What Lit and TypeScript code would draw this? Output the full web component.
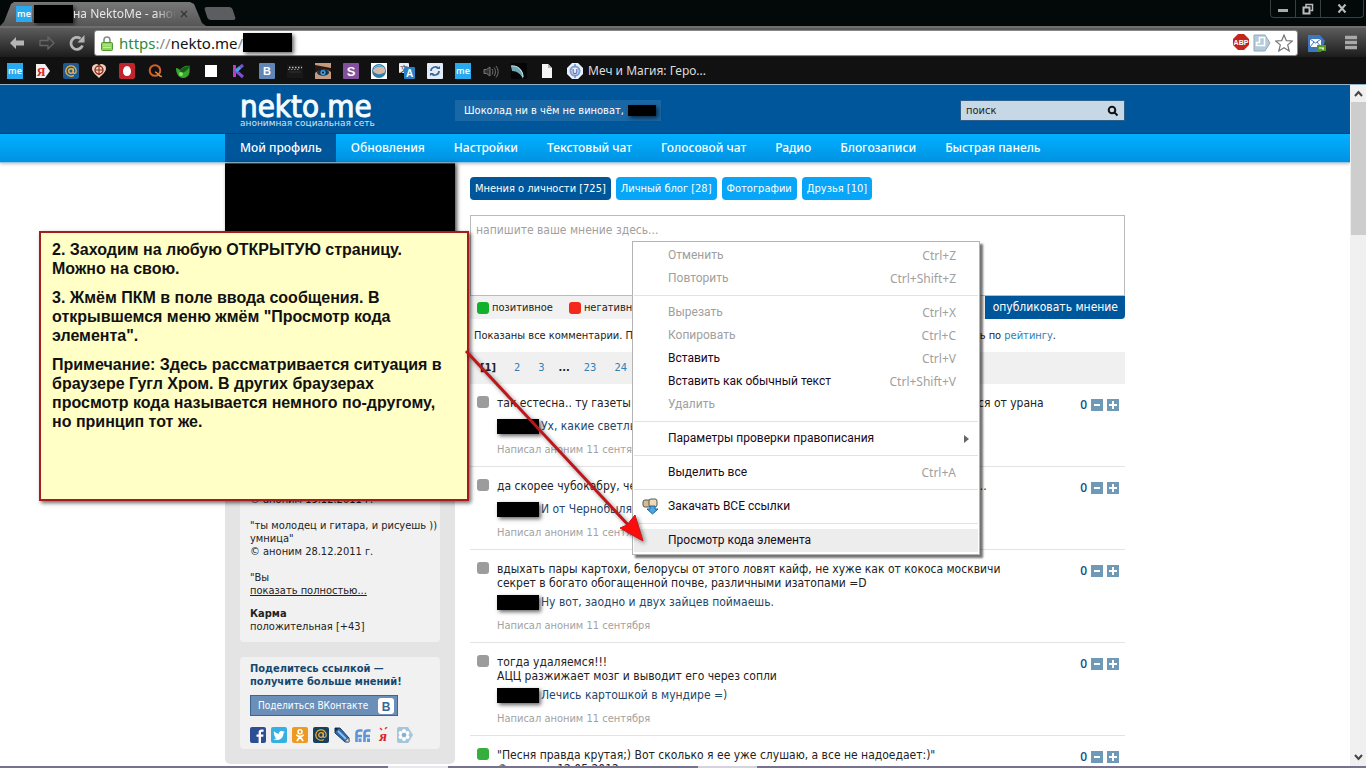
import { LitElement, html, css, svg, nothing } from "lit";
import { customElement } from "lit/decorators.js";
import { classMap } from "lit/directives/class-map.js";

const ico = (body: unknown, size = 16) =>
  html`<svg class="ico" width=${size} height=${size} viewBox="0 0 16 16" aria-hidden="true">${body}</svg>`;

const meIcon = svg`<rect width="16" height="16" fill="#2aa9ee"/><text x="8" y="11" text-anchor="middle" font-family="Open Sans, sans-serif" font-weight="600" font-size="9" fill="#fff">me</text>`;

const bookmarkIcons = [
  meIcon,
  svg`<path d="M1 1h9l5 7-5 7H1z" fill="#f1f1f1"/><text x="6" y="12.500" text-anchor="middle" font-family="Liberation Serif, serif" font-weight="700" font-size="12" fill="#d22">Я</text>`,
  svg`<rect width="16" height="16" rx="2" fill="#1d5a92"/><circle cx="8" cy="8" r="2.300" fill="none" stroke="#f0b040" stroke-width="1.400"/><path d="M10.300 5.500v3.700c0 1.800 2.900 1.500 2.900-1.200a5.200 5.200 0 1 0-2.400 4.400" fill="none" stroke="#f0b040" stroke-width="1.300"/>`,
  svg`<path d="M8 15C4 11 1 9 1 5a4 4 0 0 1 7-2.500A4 4 0 0 1 15 5c0 4-3 6-7 10z" fill="#f1cdbb"/><circle cx="8" cy="7" r="4" fill="none" stroke="#8b2d1a" stroke-width="1.300"/><path d="M4 7h8M8 3v8M5.500 9.500 8 12l2.500-2.500" stroke="#8b2d1a" fill="none"/>`,
  svg`<rect width="16" height="16" rx="2" fill="#c3242b"/><path d="M8 3c2.500 0 4 3 4 5.500S10.500 13 8 13s-4-2-4-4.500S5.500 3 8 3z" fill="#fff"/>`,
  svg`<circle cx="8" cy="7.500" r="5.300" fill="none" stroke="#d0622a" stroke-width="2"/><path d="M8 9c3 0 3.500 5 7 4.500" fill="none" stroke="#e28238" stroke-width="1.600"/>`,
  svg`<path d="M1 5c2 0 3 1 4 2 2-3 6-5 10-4-1 1 0 3-.5 6.500A6.500 6.500 0 0 1 8 15C4 15 1 11 1 5z" fill="#39a52d"/><path d="M5 7c3-3 6-4 10-4-2 4-6 7-9 7z" fill="#165e18"/><circle cx="6" cy="11" r="2" fill="#8be06b"/>`,
  svg`<rect x="2" y="2" width="12" height="12" fill="#fff"/>`,
  svg`<path d="M2 2h3v12H2z" fill="#c33bb6"/><path d="M12 2 5 8l7 6" fill="none" stroke="#7d4fd6" stroke-width="3"/><path d="M5 8l4-3.500" stroke="#39a8e0" stroke-width="3"/>`,
  svg`<rect width="16" height="16" rx="1" fill="#5f86b4"/><text x="8" y="12" text-anchor="middle" font-family="Liberation Sans, sans-serif" font-weight="700" font-size="11" fill="#fff">В</text>`,
  svg`<rect y="2" width="16" height="13" fill="#191919"/><path d="M2 4.500h13" stroke="#bdbdbd" stroke-width="1.500" stroke-dasharray="1.500 1.500"/><path d="M1 6.500h12" stroke="#8a8a8a" stroke-dasharray="1.500 1.500"/><path d="M2 9h12" stroke="#333"/>`,
  svg`<rect y="0" width="16" height="16" fill="#c29a80"/><path d="M0 2l16 3v4C11 5 5 6 0 10z" fill="#2a1712"/><ellipse cx="8" cy="9.500" rx="6" ry="3.200" fill="#17324e"/><circle cx="8" cy="9.500" r="2.600" fill="#3fa0e0"/><circle cx="8" cy="9.500" r="1" fill="#061426"/>`,
  svg`<rect width="16" height="16" rx="1" fill="#82509c"/><text x="8" y="13" text-anchor="middle" font-family="Liberation Sans, sans-serif" font-weight="700" font-size="13" fill="#fff">S</text>`,
  svg`<rect width="16" height="16" fill="#fff"/><circle cx="8" cy="8" r="7" fill="#2d7ea9"/><path d="M2 7c3-4 9-4 12-1v3c-4 3-9 3-12-1z" fill="#d8b9a7"/><path d="M3 5c3-3 7-3 10 0" stroke="#9fd2ea" fill="none"/>`,
  svg`<rect width="10" height="10" rx="1" fill="#e9eef6"/><text x="5" y="8.500" text-anchor="middle" font-family="Noto Sans CJK SC, sans-serif" font-size="8" fill="#334">文</text><rect x="5" y="4" width="11" height="12" rx="1" fill="#2d7fc4"/><text x="10.500" y="14" text-anchor="middle" font-family="Liberation Sans, sans-serif" font-weight="700" font-size="10" fill="#fff">A</text>`,
  svg`<rect width="16" height="16" rx="1" fill="#e4ecf8"/><path d="M4 8c0-4 5-5 7-3M12 8c0 4-5 5-7 3" fill="none" stroke="#3d6c9a" stroke-width="1.800"/><path d="M9 6h4V3zM7 10H3v3z" fill="#3d6c9a"/>`,
  meIcon,
  svg`<path d="M1 6.500h2.500L7 4v9L3.500 10.500H1z" fill="#333" stroke="#777"/><path d="M9 6c1.200 1.500 1.200 4 0 5.500M11 4.500c2 2.500 2 6 0 8.500M13 3c2.800 3.500 2.800 8 0 11.500" fill="none" stroke="#777"/>`,
  svg`<rect width="16" height="16" fill="#050505"/><path d="M0 3C7 1 14 8 12 16 10 11 6 8 1 8z" fill="#6fa7b2"/><path d="M0 3C6 2 12 7 12 14" stroke="#c9e8ea" fill="none"/>`,
  svg`<path d="M3 1h6l4 4v10H3z" fill="#f4f4f4"/><path d="M9 1v4h4z" fill="#b5b5b5"/>`,
  svg`<path d="M5 0h6l5 5v6l-5 5H5l-5-5V5z" fill="#e8f0fb"/><circle cx="8" cy="8" r="4.500" fill="none" stroke="#7d9fd6" stroke-width="2"/><path d="M8 1v3M8 12v3" stroke="#6e92cd" stroke-width="1.500"/><text x="8" y="11" text-anchor="middle" font-family="Liberation Sans, sans-serif" font-weight="700" font-size="8" fill="#4b76bd">U</text>`,
];

const shareIcons: [string, unknown][] = [
  ["Facebook", svg`<rect width="16" height="16" rx="2" fill="#2f4d93"/><path d="M11 16V9.700h2.200l.3-2.300H11V6c0-.8.300-1.200 1.300-1.200h1.300V2.700C13 2.600 12.400 2.500 11.700 2.500 9.700 2.500 8.600 3.700 8.600 5.700v1.700H6.500v2.300h2.100V16z" fill="#fff"/>`],
  ["Twitter", svg`<rect width="16" height="16" rx="2" fill="#35b0e2"/><path d="M13.800 4.800c-.4.200-.9.300-1.300.4.500-.3.800-.7 1-1.300-.5.300-1 .5-1.500.6a2.400 2.400 0 0 0-4 2.200C6 6.600 4.300 5.700 3.100 4.200c-.7 1.100-.3 2.500.7 3.200-.4 0-.7-.1-1-.3 0 1.100.8 2.100 1.900 2.300-.4.100-.7.100-1.100 0 .3 1 1.200 1.600 2.200 1.700A4.800 4.800 0 0 1 2.300 12c4.500 2.700 10.300 0 10.200-6 .5-.3 1-.8 1.300-1.200z" fill="#fff"/>`],
  ["Одноклассники", svg`<rect width="16" height="16" rx="2" fill="#ee9a22"/><circle cx="8" cy="4.800" r="2" fill="none" stroke="#fff" stroke-width="1.500"/><path d="M4.800 8.300c2 1.300 4.400 1.300 6.400 0M8 9.500 5.300 13.500M8 9.500l2.700 4" fill="none" stroke="#fff" stroke-width="1.700" stroke-linecap="round"/>`],
  ["Мой мир", svg`<rect width="16" height="16" rx="2" fill="#17405f"/><circle cx="8" cy="8" r="2.300" fill="none" stroke="#e8ad3a" stroke-width="1.300"/><path d="M10.300 5.500v3.700c0 1.800 2.900 1.500 2.900-1.200a5.200 5.200 0 1 0-2.400 4.400" fill="none" stroke="#e8ad3a" stroke-width="1.200"/>`],
  ["LiveJournal", svg`<path d="M1 1h5l9 10v4h-4L1 6z" fill="#2f69ab" stroke="#1d3f66"/><path d="M4 4l8 8" stroke="#8fc0ee" stroke-width="2"/><path d="M1 1h4L1 5z" fill="#17293d"/><path d="M15 15l-4-.500 3.500-3.500z" fill="#f4e7d2" stroke="#555" stroke-width=".5"/>`],
  ["FriendFeed", svg`<path d="M7.500 3.500H4.500C2.500 3.500 1.500 4.500 1.500 6.500V15M1 9h6M15.500 3.500h-3c-2 0-3 1-3 3V15M9.500 9H15" fill="none" stroke="#5f95d8" stroke-width="2.600"/><path d="M5 11.500V15M13.500 11.500V15" stroke="#5f95d8" stroke-width="3"/>`],
  ["Я.ру", svg`<path d="M4 1l2 2M11 0 9 2" stroke="#e33" stroke-width="1.500"/><text x="7" y="14" text-anchor="middle" font-family="Liberation Serif, serif" font-style="italic" font-weight="700" font-size="15" fill="#dc2127">я</text>`],
  ["Ещё", svg`<path d="M2 0h9l5 8-5 8H2a2 2 0 0 1-2-2V2a2 2 0 0 1 2-2z" fill="#a3c6da"/><g fill="#fff"><circle cx="7" cy="4" r="2"/><circle cx="7" cy="12" r="2"/><circle cx="3.500" cy="6" r="2"/><circle cx="10.500" cy="6" r="2"/><circle cx="3.500" cy="10" r="2"/><circle cx="10.500" cy="10" r="2"/></g><circle cx="7" cy="8" r="2" fill="#7fb0cc"/>`],
];

const menuGroups: { label: string; keys?: string; on?: boolean; sub?: boolean; icon?: boolean; hot?: boolean }[][] = [
  [{ label: "Отменить", keys: "Ctrl+Z" }, { label: "Повторить", keys: "Ctrl+Shift+Z" }],
  [
    { label: "Вырезать", keys: "Ctrl+X" },
    { label: "Копировать", keys: "Ctrl+C" },
    { label: "Вставить", keys: "Ctrl+V", on: true },
    { label: "Вставить как обычный текст", keys: "Ctrl+Shift+V", on: true },
    { label: "Удалить" },
  ],
  [{ label: "Параметры проверки правописания", on: true, sub: true }],
  [{ label: "Выделить все", keys: "Ctrl+A", on: true }],
  [{ label: "Закачать ВСЕ ссылки", on: true, icon: true }],
  [{ label: "Просмотр кода элемента", on: true, hot: true }],
];

const comments: { text: string[]; reply?: string; meta?: string; good?: boolean }[] = [
  { text: ["так естесна.. ту газеты просто не читают, в них пишут что картошка вообще берётся от урана"], reply: "Ух, какие светлые мысли", meta: "Написал аноним 11 сентября" },
  { text: ["да скорее чубокабру, чем простую картошку можно встретить в тех самых местах...."], reply: "И от Чернобыля", meta: "Написал аноним 11 сентября" },
  { text: ["вдыхать пары картохи, белорусы от этого ловят кайф, не хуже как от кокоса москвичи", "секрет в богато обогащенной почве, различными изатопами =D"], reply: "Ну вот, заодно и двух зайцев поймаешь.", meta: "Написал аноним 11 сентября" },
  { text: ["тогда удаляемся!!!", "АЦЦ разжижает мозг и выводит его через сопли"], reply: "Лечись картошкой в мундире =)", meta: "Написал аноним 11 сентября" },
  { text: ["\"Песня правда крутая;) Вот сколько я ее уже слушаю, а все не надоедает:)\"", "© аноним 12.05.2012"], good: true },
];

const base = css`
  * { box-sizing: border-box; }
  button { border: 0; margin: 0; padding: 0; background: none; font: inherit; color: inherit; text-align: left; }
  a { color: inherit; text-decoration: none; }
  ul, p, h2, h3 { margin: 0; padding: 0; list-style: none; font-size: inherit; }
  .ico { display: block; flex: none; }
  .hidden { display: inline-block; flex: none; background: #000; box-shadow: 2px 2px 4px rgba(0, 0, 0, 0.6); }
`;

@customElement("browser-chrome")
class BrowserChrome extends LitElement {
  static styles = [base, css`
    :host { display: block; background: #030808; font: 12px/16px "Noto Sans", sans-serif; color: #ddd; border-bottom: 1px solid #8fb4c8; }
    .strip { display: flex; height: 26px; align-items: flex-end; }
    .tab { display: flex; align-items: center; width: 206px; height: 24px; padding: 0 18px 0 16px; background: linear-gradient(#787878, #565656); clip-path: polygon(0 100%, 4px 82%, 11px 8%, 14px 0, 190px 0, 194px 8%, 202px 88%, 100% 100%); white-space: nowrap; }
    .tab .hidden { width: 39px; height: 18px; margin-left: 2px; }
    .title { flex: 1; overflow: hidden; color: #e6e6e6; mask-image: linear-gradient(90deg, #000 80%, transparent); }
    .x { margin-left: 4px; }
    .new { width: 28px; height: 13px; margin: 0 0 6px; background: #5b5d60; border-radius: 3px; transform: skewX(18deg); }
    .win { display: flex; margin-left: auto; margin-right: 2px; align-self: flex-start; height: 18px; border: 1px solid #3a3f40; border-top: 0; border-radius: 0 0 4px 4px; }
    .win button { width: 25px; display: grid; place-items: center; border-right: 1px solid #3a3f40; }
    .win button:last-child { width: 42px; border: 0; }
    .bar { display: flex; align-items: center; height: 31px; padding: 0 8px; background: linear-gradient(#5c5c5c, #1c1c1c); border-top: 2px solid #6e6e6e; }
    .nav { display: flex; gap: 12px; width: 86px; }
    .omni { flex: 1; display: flex; align-items: center; height: 26px; padding: 0 4px 0 5px; background: #fff; border: 1px solid #888; border-radius: 3px; font-size: 15px; line-height: 24px; color: #111; }
    .omni .hidden { width: 49px; height: 19px; }
    .lock { margin-right: 5px; }
    .https { color: #2e8b3c; }
    .dim { color: #888; }
    .tools { display: flex; gap: 4px; margin-left: auto; }
    .ext { display: flex; align-items: center; gap: 18px; margin-left: 10px; }
    .marks { display: flex; align-items: center; gap: 12px; height: 27px; padding: 0 7px; background: #111112; }
    .marks a { display: flex; gap: 5px; color: #ddd; }
  `];
  render() {
    return html`
      <div class="strip">
        <div class="tab">${ico(meIcon)}<span class="hidden"></span><span class="title">на NektoMe - анон</span><button class="x" aria-label="Закрыть вкладку">
          <svg class="ico" width="8" height="8" viewBox="0 0 8 8"><path d="M1 1l6 6M7 1 1 7" stroke="#333" stroke-width="1.200"/></svg></button></div>
        <button class="new" aria-label="Новая вкладка"></button>
        <div class="win">
          <button aria-label="Свернуть"><svg width="12" height="12"><rect x="1" y="6" width="10" height="3" fill="#aaa"/></svg></button>
          <button aria-label="Развернуть"><svg width="12" height="12"><path d="M4 4V1.500h6.500v6H8.500" fill="none" stroke="#bbb" stroke-width="1.500"/><rect x="1.500" y="4.500" width="6" height="6" fill="none" stroke="#bbb" stroke-width="2"/></svg></button>
          <button aria-label="Закрыть"><svg width="12" height="12"><path d="M2.500 1.500l7 8M9.500 1.500l-7 8" stroke="#bbb" stroke-width="2"/></svg></button>
        </div>
      </div>
      <div class="bar">
        <div class="nav">
          <button aria-label="Назад"><svg class="ico" width="18" height="18" viewBox="0 0 18 18"><path d="M2 9l6-6v3.500h8v5H8V15z" fill="#b5b5b5"/></svg></button>
          <button aria-label="Вперёд"><svg class="ico" width="18" height="18" viewBox="0 0 18 18"><path d="M16 9l-6-6v3.500H2v5h8V15z" fill="none" stroke="#666" stroke-width="1.300"/></svg></button>
          <button aria-label="Обновить"><svg class="ico" width="18" height="18" viewBox="0 0 18 18"><path d="M14.500 11.500A6 6 0 1 1 12.500 4.500" fill="none" stroke="#b5b5b5" stroke-width="2.800"/><path d="M16.500 1v7.500H9.500z" fill="#b5b5b5"/></svg></button>
        </div>
        <div class="omni">
          <svg class="lock" width="14" height="16" viewBox="0 0 14 16"><path d="M4 8V5a3 3 0 0 1 6 0v3" fill="none" stroke="#8a8a8a" stroke-width="1.600"/><rect x="1.500" y="7.500" width="11" height="8" rx="1" fill="#8fd25e" stroke="#4d9a2c"/><path d="M3 10h8M3 12.500h8" stroke="#c3ec9f"/></svg>
          <span class="https">https</span><span class="dim">://</span><span>nekto.me</span><span class="dim">/</span><span class="hidden"></span>
          <div class="tools">
            ${ico(svg`<path d="M5 0h6l5 5v6l-5 5H5l-5-5V5z" fill="#c4261d"/><text x="8" y="10.500" text-anchor="middle" font-family="Liberation Sans, sans-serif" font-weight="700" font-size="7" fill="#fff">ABP</text>`)}
            <svg class="ico" width="18" height="18" viewBox="0 0 18 18"><path d="M1 1h11l5 8-5 8H1z" fill="#b5cbd8" stroke="#8ea9b8"/><path d="M6.500 3.500h5v8h-8v-3h3z" fill="#b5cbd8" stroke="#fff" stroke-width="1.500"/></svg>
            <svg class="ico" width="18" height="18" viewBox="0 0 18 18"><path d="M9 1l2.300 5.600 6 .4-4.600 3.900L14.200 17 9 13.700 3.800 17l1.500-6.100L.7 7l6-.4z" fill="#fff" stroke="#777" stroke-width="1.200"/></svg>
          </div>
        </div>
        <div class="ext">
          <svg class="ico" width="18" height="18" viewBox="0 0 18 18"><path d="M0 1h12l5 6-4 11H0z" fill="#3f77bd"/><rect x="2" y="5" width="11" height="8" fill="#fff"/><path d="M2 5l5.500 4L13 5M2 13l4-5M13 13 9 8" fill="none" stroke="#3f77bd"/><rect x="9" y="11" width="9" height="6" fill="#4f9a1f"/><path d="M11 14h5M15 14v2" stroke="#fff"/></svg>
          <svg class="ico" width="14" height="15"><path d="M1 2.500h12M1 7.500h12M1 12.500h12" stroke="#a9a9a9" stroke-width="3.400"/></svg>
        </div>
      </div>
      <div class="marks">
        ${bookmarkIcons.map((b, i) => html`<a href="#">${ico(b)}${i === 20 ? "Меч и Магия: Геро..." : nothing}</a>`)}
      </div>`;
  }
}

@customElement("context-menu")
class ContextMenu extends LitElement {
  static styles = [base, css`
    :host { display: block; padding: 2px 1px; background: #fff; border: 1px solid #b4b4b4; box-shadow: 3px 3px 2px rgba(0, 0, 0, 0.55); font: 12px/23px Roboto, sans-serif; color: #a0a0a0; }
    ul + ul { margin-top: 5px; padding-top: 5px; border-top: 1px solid #e2e2e2; }
    button { position: relative; display: flex; justify-content: space-between; width: 100%; padding: 0 22px 0 34px; white-space: nowrap; }
    .on { color: #1a0a1a; }
    .keys { font-family: "Noto Sans", sans-serif; color: #a0a0a0; }
    .hot { background: #ededed; }
    .sub { padding-right: 8px; align-items: center; }
    .lead { position: absolute; left: 8px; top: 3px; }
  `];
  render() {
    return menuGroups.map((g) => html`<ul>${g.map((m) => html`<li><button class=${classMap({ on: !!m.on, hot: !!m.hot, sub: !!m.sub })}>
      ${m.icon ? html`<svg class="lead" width="17" height="17" viewBox="0 0 17 17"><rect x="1" y="2" width="8" height="7" rx="2" fill="#dcb98c" stroke="#4b5a60"/><rect x="7" y="1" width="8" height="8" rx="2" fill="#f0d9b5" stroke="#4b5a60"/><path d="M8 8h5v3h3l-5.500 5L5 11h3z" fill="#4aa6e6" stroke="#1d6299"/></svg>` : nothing}
      <span>${m.label}</span>
      ${m.keys ? html`<span class="keys">${m.keys}</span>` : nothing}
      ${m.sub ? html`<svg width="6" height="8"><path d="M0 0l5 4-5 4z" fill="#666"/></svg>` : nothing}
    </button></li>`)}</ul>`);
  }
}

@customElement("app-root")
class AppRoot extends LitElement {
  static styles = [base, css`
    :host { display: flex; flex-direction: column; height: 100vh; overflow: hidden; background: #fff; font: 11px/13px "DejaVu Sans Condensed", "DejaVu Sans", sans-serif; color: #222; }
    .view { flex: 1; min-height: 0; display: flex; overflow: hidden; }
    .page { flex: 1; min-width: 0; overflow: hidden; }
    .wrap { max-width: 900px; margin: 0 auto; }
    .head { background: #00569b; border-bottom: 1px solid #02467f; }
    .head .wrap { display: flex; align-items: flex-start; height: 48px; padding: 0 1px 0 15px; color: #fff; }
    .brand { width: 215px; padding-top: 5px; }
    .logo { display: block; font: 31px/32px "DejaVu Sans Condensed", sans-serif; color: #f2fbff; -webkit-text-stroke: 1px #f2fbff; }
    .slogan { display: block; margin-top: -4px; font: 9px/10px "DejaVu Sans", sans-serif; color: #cfe6f7; }
    .greet { display: flex; align-items: center; gap: 4px; height: 21px; margin-top: 15px; padding: 0 5px 0 9px; background: #1a67a6; white-space: nowrap; }
    .greet .hidden { width: 28px; height: 11px; }
    .search { display: flex; align-items: center; width: 163px; height: 19px; margin: 16px 0 0 auto; padding: 0 5px; background: #c6d8e6; box-shadow: 0 0 0 1px #2b5f8c; }
    .search input { flex: 1; min-width: 0; border: 0; padding: 0; background: none; font: 11px/17px "DejaVu Sans Condensed", sans-serif; color: #222; }
    .search input::placeholder { color: #222; opacity: 1; }
    .menu { background: linear-gradient(#00b1ff, #0092e2); border-bottom: 1px solid #9bc4de; box-shadow: 0 1px 3px rgba(0, 0, 0, 0.25); }
    .menu .wrap { display: flex; }
    .menu a { padding: 0 14px 0 15px; font: 500 12px/28px "Noto Sans", sans-serif; color: #fff; white-space: nowrap; }
    .menu a.active { background: #00569b; }
    .content { position: relative; display: flex; gap: 15px; align-items: flex-start; }
    .side { width: 230px; flex: none; padding-bottom: 15px; background: #e4e4e4; border-radius: 0 0 5px 5px; }
    .photo { display: block; height: 300px; background: #000; border-top: 1px solid #8c1c22; box-shadow: 2px 1px 4px rgba(0, 0, 0, 0.7); }
    .card { margin: 15px 15px 0; padding: 15px 10px 9px; background: #f1f1f1; border-radius: 4px; white-space: nowrap; }
    .card p + p { margin-top: 13px; }
    .card p a { text-decoration: underline; }
    .card p + .karma { margin-top: 10px; }
    .share { padding: 5px 10px 6px; }
    .share h3 { color: #15486f; }
    .vk { display: flex; justify-content: space-between; align-items: center; width: 148px; height: 21px; margin: 7px 0 11px; padding: 0 3px 0 7px; background: #6b8fb8; border: 1px solid #3c6592; color: #fff; font-size: 10px; }
    .socials { display: flex; gap: 5px; }
    .main { flex: 1; min-width: 0; padding-top: 14px; }
    .tabs { display: flex; gap: 5px; margin-bottom: 15px; }
    .tabs a { padding: 0 5px; line-height: 23px; border-radius: 4px; background: #07a6f8; color: #fff; white-space: nowrap; }
    .tabs a.active { background: #00569b; }
    textarea { display: block; width: 100%; height: 81px; padding: 6px 5px; border: 1px solid #bbb; resize: none; font: 12px/16px "DejaVu Sans Condensed", sans-serif; }
    textarea::placeholder { color: #a0a0a0; opacity: 1; }
    .mood { display: flex; align-items: center; gap: 16px; padding-left: 7px; background: #f1f1f1; }
    .mood label { display: flex; align-items: center; gap: 3px; }
    .mood input, .dot { appearance: none; flex: none; width: 12px; height: 12px; margin: 0; border-radius: 3px; background: #9c9c9c; }
    .mood .pos { background: #11b12c; }
    .mood .neg { background: #f5281c; }
    .dot.good { background: #35ae3d; }
    .publish { margin-left: auto; padding: 0 7px 0 8px; background: #00569b; color: #fff; font-size: 12px; line-height: 23px; border-radius: 0 0 4px 0; }
    .info { display: flex; justify-content: space-between; padding: 10px 69px 10px 4px; white-space: nowrap; }
    .blue { color: #2d7fb8; }
    .pages { display: flex; gap: 18px; padding: 0 10px; background: #f0f0f0; line-height: 32px; }
    .pages .dots { margin: 0 -4px; }
    .item { display: flex; gap: 8px; padding: 12px 6px 9px 7px; border-bottom: 1px solid #e3e3e3; }
    .body { flex: 1; min-width: 0; font-size: 12px; line-height: 14px; white-space: nowrap; }
    .said { min-height: 18px; }
    .reply { display: flex; align-items: center; height: 14px; margin: 5px 0 10px; color: #23466b; }
    .reply .hidden { width: 42px; height: 15px; margin-right: 2px; }
    .meta { font-size: 11px; color: #a2a2a2; }
    .rate { display: flex; align-items: center; gap: 4px; height: 18px; color: #14507f; font: 600 12px/18px "Open Sans", sans-serif; }
    .bottom { height: 2px; background: linear-gradient(90deg, #77738f 388px, #e8e8ee 388px 448px, #77738f 448px 698px, #d5d3de 698px 757px, #77738f 757px); }
    .scroll { width: 16px; background: #f0f0f0; display: flex; flex-direction: column; align-items: center; }
    .arrow { height: 17px; display: grid; place-items: center; }
    .thumb { width: 15px; height: 133px; background: #cdcdcd; }
    .scroll .arrow:last-child { margin-top: auto; }
    .ctx { position: absolute; left: 407px; top: 78px; width: 348px; z-index: 2; }
    .note { position: absolute; left: -186px; top: 68px; width: 430px; height: 270px; padding: 7px 11px; background: #ffffc6; border: 2px solid #a61c1c; box-shadow: 2px 2px 4px rgba(0, 0, 0, 0.6); font: 700 16px/19px "Liberation Sans", sans-serif; color: #111; white-space: nowrap; z-index: 3; }
    .note p + p { margin-top: 10px; }
    .pointer { position: absolute; left: 238px; top: 184px; z-index: 4; filter: drop-shadow(2px 2px 2px rgba(0, 0, 0, 0.45)); }
  `];

  private box(plus: boolean) {
    return html`<button aria-label=${plus ? "Плюс" : "Минус"}><svg class="ico" width="12" height="12"><rect width="12" height="12" fill="#6e9ab8"/><path d=${plus ? "M2 6h8M6 2v8" : "M3 6h6"} stroke="#fff" stroke-width="2"/></svg></button>`;
  }

  render() {
    return html`
      <browser-chrome></browser-chrome>
      <div class="view">
        <div class="page">
          <header class="head"><div class="wrap">
            <a class="brand" href="#"><span class="logo">nekto.me</span><span class="slogan">анонимная социальная сеть</span></a>
            <div class="greet">Шоколад ни в чём не виноват, <span class="hidden"></span></div>
            <div class="search"><input type="text" aria-label="Поиск" placeholder="поиск" /><button aria-label="Найти"><svg class="ico" width="12" height="12"><circle cx="5" cy="5" r="3.300" fill="none" stroke="#111" stroke-width="2"/><path d="M7.500 7.500l3 3" stroke="#111" stroke-width="2"/></svg></button></div>
          </div></header>
          <nav class="menu"><div class="wrap">
            ${["Мой профиль", "Обновления", "Настройки", "Текстовый чат", "Голосовой чат", "Радио", "Блогозаписи", "Быстрая панель"].map((t, i) => html`<a href="#" class=${classMap({ active: i === 0 })}>${t}</a>`)}
          </div></nav>
          <div class="wrap content">
            <aside class="side">
              <span class="photo"></span>
              <div class="card">
                <p>© аноним 19.12.2011 г.</p>
                <p>"ты молодец и гитара, и рисуешь ))<br />умница"<br />© аноним 28.12.2011 г.</p>
                <p>"Вы<br /><a href="#">показать полностью...</a></p>
                <p class="karma"><b>Карма</b><br />положительная [+43]</p>
              </div>
              <div class="card share">
                <h3>Поделитесь ссылкой —<br />получите больше мнений!</h3>
                <button class="vk">Поделиться ВКонтакте ${ico(svg`<rect width="16" height="16" rx="3" fill="#fff"/><text x="8" y="12.500" text-anchor="middle" font-family="Liberation Sans, sans-serif" font-weight="700" font-size="12" fill="#3c6592">В</text>`)}</button>
                <div class="socials">${shareIcons.map(([n, b]) => html`<a href="#" aria-label=${n}>${ico(b)}</a>`)}</div>
              </div>
            </aside>
            <main class="main">
              <div class="tabs"><a class="active" href="#">Мнения о личности [725]</a><a href="#">Личный блог [28]</a><a href="#">Фотографии</a><a href="#">Друзья [10]</a></div>
              <textarea aria-label="Мнение" placeholder="напишите ваше мнение здесь..."></textarea>
              <div class="mood">
                <label><input class="pos" type="radio" name="mood" />позитивное</label>
                <label><input class="neg" type="radio" name="mood" />негативное</label>
                <button class="publish">опубликовать мнение</button>
              </div>
              <div class="info"><span>Показаны все комментарии. Показать</span><span>Сортировать по <a class="blue" href="#">рейтингу</a>.</span></div>
              <div class="pages"><b>[1]</b><a class="blue" href="#">2</a><a class="blue" href="#">3</a><b class="dots">...</b><a class="blue" href="#">23</a><a class="blue" href="#">24</a></div>
              ${comments.map((c) => html`<article class="item">
                <span class=${classMap({ dot: true, good: !!c.good })}></span>
                <div class="body">
                  <div class="said">${c.text.map((t) => html`<div>${t}</div>`)}</div>
                  ${c.reply ? html`<div class="reply"><span class="hidden"></span>${c.reply}</div><div class="meta">${c.meta}</div>` : nothing}
                </div>
                <div class="rate">0 ${this.box(false)}${this.box(true)}</div>
              </article>`)}
            </main>
            <context-menu class="ctx"></context-menu>
            <section class="note">
              <p>2. Заходим на любую ОТКРЫТУЮ страницу.<br />Можно на свою.</p>
              <p>3. Жмём ПКМ в поле ввода сообщения. В<br />открывшемся меню жмём "Просмотр кода<br />элемента".</p>
              <p>Примечание: Здесь рассматривается ситуация в<br />браузере Гугл Хром. В других браузерах<br />просмотр кода называется немного по-другому,<br />но принцип тот же.</p>
            </section>
            <svg class="pointer" width="184" height="200" viewBox="0 0 184 200" aria-hidden="true"><path d="M3 4 168 181" stroke="#bd161b" stroke-width="3"/><path d="M180 194 157 181 164 178 172 168z" fill="#fb0d0d" stroke="#c5161b"/></svg>
          </div>
        </div>
        <div class="scroll" aria-hidden="true">
          <span class="arrow"><svg width="9" height="7"><path d="M1 6l3.500-4L8 6" fill="none" stroke="#444" stroke-width="2"/></svg></span>
          <span class="thumb"></span>
          <span class="arrow"><svg width="9" height="7"><path d="M1 1l3.500 4L8 1" fill="none" stroke="#444" stroke-width="2"/></svg></span>
        </div>
      </div>
      <div class="bottom"></div>`;
  }
}
